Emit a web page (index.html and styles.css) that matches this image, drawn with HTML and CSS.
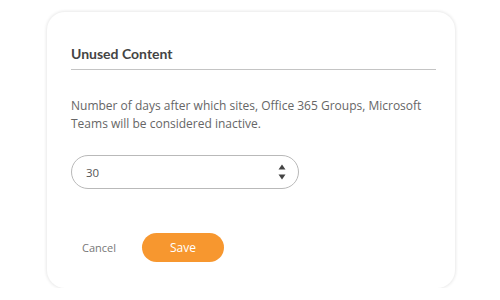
FILE: index.html
```html
<!DOCTYPE html>
<html>
<head>
<meta charset="utf-8">
<link rel="stylesheet" href="styles.css">
</head>
<body>
<div class="card">
  <h2 class="title">Unused Content</h2>
  <p class="desc">Number of days after which sites, Office 365 Groups, Microsoft Teams will be considered inactive.</p>
  <div class="field">
    <span class="value">30</span>
    <span class="spin">
      <svg width="8" height="6" viewBox="0 0 8 6"><path d="M4 0.5L7.5 5.5H0.5Z" fill="#444"/></svg>
      <svg width="8" height="6" viewBox="0 0 8 6"><path d="M4 5.5L7.5 0.5H0.5Z" fill="#444"/></svg>
    </span>
  </div>
  <div class="actions">
    <button class="cancel">Cancel</button>
    <button class="save">Save</button>
  </div>
</div>
</body>
</html>
```
FILE: styles.css
```css
html, body {
  margin: 0;
  padding: 0;
  background: #fff;
}
body {
  padding: 12px 0 0 47px;
  font-family: "Open Sans", "Noto Sans", sans-serif;
}
.card {
  box-sizing: border-box;
  width: 408px;
  height: 276px;
  border-radius: 18px;
  box-shadow: 0 0 3px 1px rgba(0,0,0,0.09);
  padding: 32px 19px 0 24px;
}
.title {
  margin: 0;
  font-family: "Lato", sans-serif;
  font-weight: 700;
  font-size: 14px;
  color: #444;
  line-height: 20px;
  padding-bottom: 5px;
  border-bottom: 1px solid #c4c4c4;
}
.desc {
  margin: 27px 0 0;
  font-size: 12px;
  line-height: 18px;
  color: #666;
}
.field {
  box-sizing: border-box;
  margin-top: 22px;
  width: 228px;
  height: 34px;
  border: 1px solid #b9b9b9;
  border-radius: 17px;
  display: flex;
  align-items: center;
  justify-content: space-between;
  padding: 0 12px 0 14px;
}
.value {
  font-size: 11.5px;
  color: #555;
}
.spin {
  display: flex;
  flex-direction: column;
  gap: 4px;
}
.spin svg { display: block; }
.actions {
  margin-top: 44px;
  display: flex;
  align-items: center;
}
.cancel {
  border: 0;
  background: none;
  padding: 0;
  margin-left: 11px;
  font-family: inherit;
  font-size: 11px;
  color: #777;
}
.save {
  margin-left: 26px;
  border: 0;
  width: 82px;
  height: 29px;
  border-radius: 15px;
  background: #f7972f;
  color: #fff;
  font-family: inherit;
  font-size: 12px;
}
```
